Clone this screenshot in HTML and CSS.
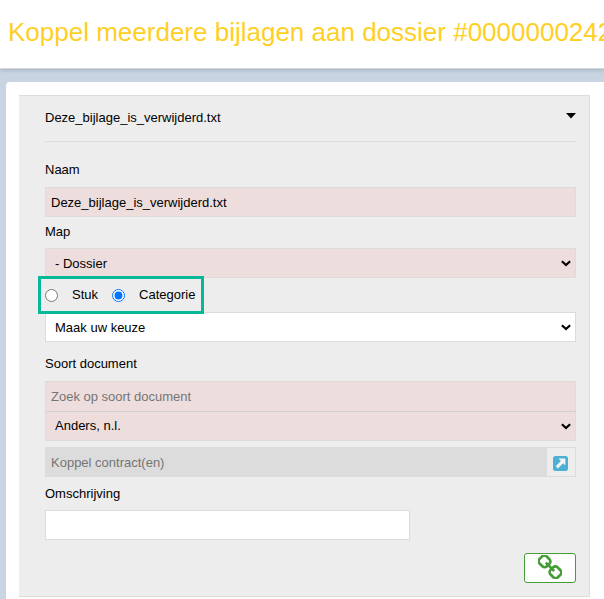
FILE: index.html
```html
<!DOCTYPE html>
<html lang="nl">
<head>
<meta charset="utf-8">
<title>Koppel meerdere bijlagen</title>
<link rel="stylesheet" href="styles.css">
</head>
<body>
<header class="page-header"><h1>Koppel meerdere bijlagen aan dossier #0000000242</h1></header>
<main class="card">
  <section class="panel">
    <div class="panel-head">
      <span>Deze_bijlage_is_verwijderd.txt</span>
      <svg class="caret" width="10" height="6" viewBox="0 0 10 6"><path d="M0 0h10L5 5.6z"/></svg>
    </div>
    <form class="form">
      <label class="label first">Naam</label>
      <input class="field required" type="text" value="Deze_bijlage_is_verwijderd.txt">
      <label class="label">Map</label>
      <div class="select">
        <select class="field required"><option>- Dossier</option></select>
        <svg class="chevron" width="10" height="7" viewBox="0 0 10 7"><path d="M0.900 1.200L5 5.100 9.100 1.200"/></svg>
      </div>
      <div class="choice">
        <input type="radio" name="soort"><span class="stuk">Stuk</span>
        <input type="radio" name="soort" checked><span>Categorie</span>
        <div class="highlight"></div>
      </div>
      <div class="select">
        <select class="field"><option>Maak uw keuze</option></select>
        <svg class="chevron" width="10" height="7" viewBox="0 0 10 7"><path d="M0.900 1.200L5 5.100 9.100 1.200"/></svg>
      </div>
      <label class="label doc">Soort document</label>
      <input class="field required search" type="text" placeholder="Zoek op soort document">
      <div class="select">
        <select class="field required joined"><option>Anders, n.l.</option></select>
        <svg class="chevron" width="10" height="7" viewBox="0 0 10 7"><path d="M0.900 1.200L5 5.100 9.100 1.200"/></svg>
      </div>
      <div class="contract">
        <input class="field" type="text" placeholder="Koppel contract(en)">
        <span class="open">
          <svg width="15" height="15" viewBox="0 0 15 15"><rect width="15" height="15" rx="2.500" fill="#4bb0d3"/><path d="M5.500 2.600H12.300V9.400L10.100 7.200 4.900 12.400 2.700 10.200 7.900 5z" fill="#f4f4f4"/></svg>
        </span>
      </div>
      <label class="label desc">Omschrijving</label>
      <input class="field short" type="text">
      <div class="actions">
        <button class="link" type="button" aria-label="Koppelen">
          <svg width="24" height="24" viewBox="0 0 24 24" fill="none" stroke="#449d35" stroke-width="2.700">
            <rect x="1.300" y="1.300" width="10.400" height="10" rx="3.200" transform="rotate(45 6.500 6.300)"/>
            <rect x="12.300" y="12.300" width="10.400" height="10" rx="3.200" transform="rotate(45 17.500 17.300)"/>
            <path d="M7.800 7.600l8.400 8.400"/>
          </svg>
        </button>
      </div>
    </form>
  </section>
</main>
</body>
</html>
```
FILE: styles.css
```css
* { box-sizing: border-box; }
html, body { height: 100%; }
body {
  margin: 0;
  overflow: hidden;
  background: #c8d4e2;
  color: #000;
  font: 13px/16px "Liberation Sans", Arial, sans-serif;
}
.page-header {
  position: relative;
  height: 69px;
  padding: 16px 0 0 8px;
  background: #fff;
  border-bottom: 1px solid #d5d8dc;
  box-shadow: 0 1px 4px rgba(70, 85, 105, .3);
}
h1 {
  margin: 0;
  color: #ffcf24;
  font-size: 26px;
  font-weight: 400;
  line-height: 32px;
  white-space: nowrap;
}
.card {
  height: 530px;
  margin: 13px 0 0 6px;
  padding: 13px 14px 0 13px;
  background: #fff;
  border-radius: 4px 0 0 0;
}
.panel {
  height: 502px;
  padding: 0 13px 0 26px;
  background: #ededed;
  border: solid #dcdcdc;
  border-width: 1px 1px 1px 0;
}
.panel-head {
  display: flex;
  justify-content: space-between;
  height: 46px;
  padding-top: 14px;
  border-bottom: 1px solid #dcdcdc;
}
.caret { margin: 3px 0 0; }
.form { display: flex; flex-direction: column; }
.label { height: 16px; margin: 7px 0 8px; }
.label.first { margin: 20px 0 9px; }
.label.doc { margin: 14px 0 9px; }
.label.desc { margin: 9px 0 8px; }
.field {
  display: block;
  width: 100%;
  height: 30px;
  margin: 0;
  padding: 0 5px;
  background-color: #fff;
  color: #000;
  border: 1px solid #dcdcdc;
  border-radius: 0;
  font: inherit;
  outline: 0;
}
.field::placeholder { color: #757575; opacity: 1; }
.select { position: relative; }
.select .field { appearance: none; padding: 1px 24px 0 9px; }
.chevron {
  position: absolute;
  right: 5px;
  top: 12px;
  fill: none;
  stroke: #000;
  stroke-width: 2.2;
}
.required { background-color: #eedddd; }
.search { border-bottom-color: #d2d0d0; height: 31px; }
.select .joined { border-top: 0; height: 29px; padding-top: 0; padding-bottom: 1px; }
.joined + .chevron { top: 11px; }
.choice {
  position: relative;
  display: flex;
  height: 34px;
  padding-top: 9px;
}
.choice input { width: 13px; height: 13px; margin: 2px 14px 0 0; }
.stuk { margin-right: 14px; }
.highlight {
  position: absolute;
  z-index: 1;
  left: -7px;
  top: -2px;
  width: 166px;
  height: 38px;
  border: 3px solid #06b798;
}
.contract { display: flex; margin-top: 6px; }
.contract .field { flex: 1; background: #dcdcdc; }
.open {
  display: flex;
  align-items: center;
  justify-content: center;
  width: 29px;
  height: 30px;
  padding: 3px 1px 0 0;
  border: solid #dcdcdc;
  border-width: 1px 1px 1px 0;
}
.short { width: 365px; }
.actions { display: flex; justify-content: flex-end; margin-top: 13px; }
.link {
  width: 52px;
  height: 30px;
  padding: 0 0 3px;
  background: #fff;
  border: 1px solid #449d35;
  border-radius: 3px;
}
.link svg { display: block; margin: 0 auto; }
```
